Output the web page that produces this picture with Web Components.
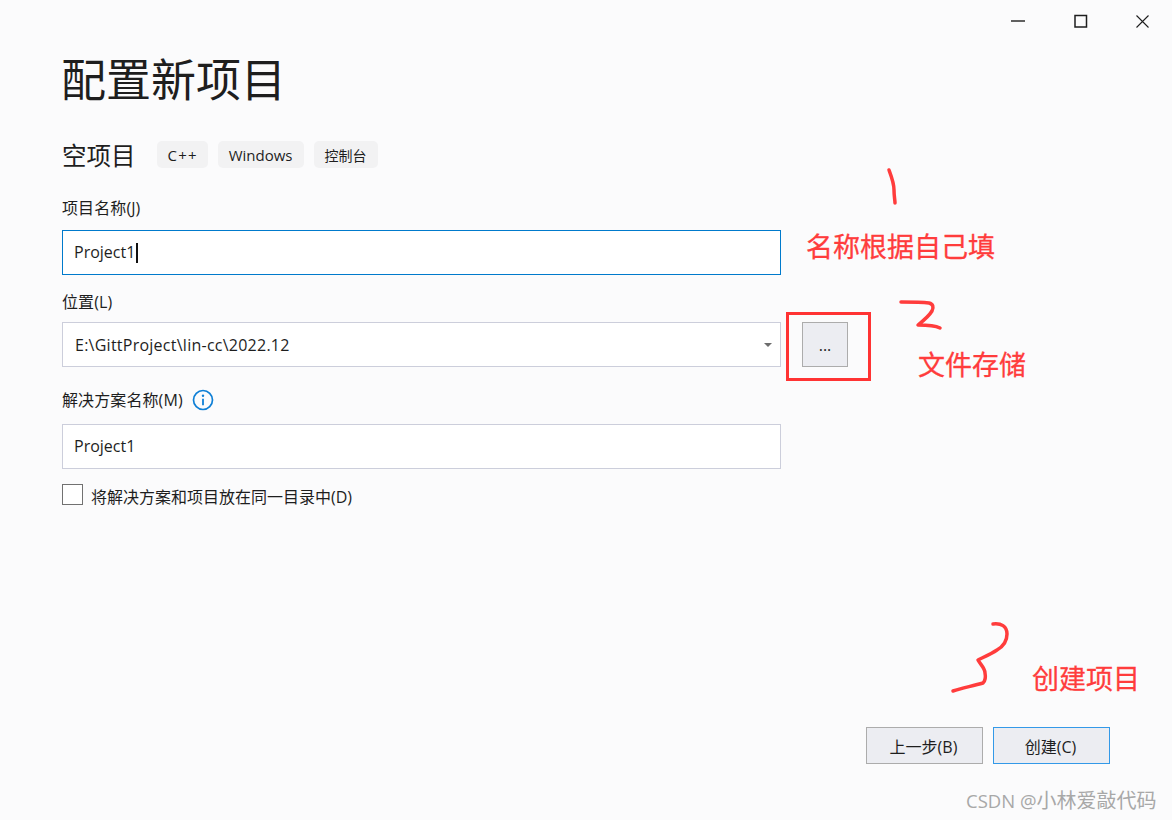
<!DOCTYPE html>
<html lang="zh">
<head>
<meta charset="utf-8">
<title>配置新项目</title>
<style>
  html, body { margin: 0; height: 100%; background: #fbfbfc; }
  body { font-family: "Open Sans", "Noto Sans CJK SC", sans-serif; color: #1e1e1e; overflow: hidden; }
</style>
</head>
<body>
<project-dialog>
  <win-controls slot="controls"></win-controls>
  <field-box slot="form" label="项目名称(J)" value="Project1" focused style="--label-gap:11px;--val-shift:2px"></field-box>
  <field-box slot="form" label="位置(L)" value="E:\GittProject\lin-cc\2022.12" combo style="margin-top:16px;--label-gap:9px;--val-track:.25px;--val-left:1px"></field-box>
  <field-box slot="form" label="解决方案名称(M)" value="Project1" info style="margin-top:22px;--label-gap:13px;--val-shift:2px"></field-box>
  <check-row slot="form">将解决方案和项目放在同一目录中(D)</check-row>
  <flat-button slot="actions">上一步(B)</flat-button>
  <flat-button slot="actions" primary>创建(C)</flat-button>
</project-dialog>
<red-notes></red-notes>

<script>
class WinControls extends HTMLElement {
  connectedCallback() {
    this.attachShadow({ mode: "open" }).innerHTML = `
      <style>
        :host { display: flex; justify-content: flex-end; height: 42px; }
        svg { display: block; }
      </style>
      <svg width="182" height="42" viewBox="0 0 182 42" fill="none" stroke="#1e1e1e">
        <path d="M21 21h14" stroke-width="1.4"/>
        <rect x="85" y="15.500" width="11.500" height="11.500" stroke-width="1.500"/>
        <path d="M146.500 15.500l12 12M158.500 15.500l-12 12" stroke-width="1.100"/>
      </svg>`;
  }
}

class TagChip extends HTMLElement {
  connectedCallback() {
    this.attachShadow({ mode: "open" }).innerHTML = `
      <style>
        :host { display: block; height: 27px; line-height: 29px; padding: 0 11px; background: #f2f2f3;
                border-radius: 5px; font-size: 14px; color: #1e1e1e; }
      </style>
      <slot></slot>`;
  }
}

class FieldBox extends HTMLElement {
  connectedCallback() {
    const info = this.hasAttribute("info") ? `
      <svg class="info" width="22" height="22" viewBox="0 0 22 22" fill="none">
        <circle cx="11" cy="11" r="9.500" stroke="#0e7fd6" stroke-width="1.700"/>
        <circle cx="11" cy="6.800" r="1.200" fill="#0e7fd6"/>
        <path d="M11 9.800v6.400" stroke="#0e7fd6" stroke-width="1.800"/>
      </svg>` : "";
    const caret = this.hasAttribute("combo") ? `<span class="caret"></span>` : "";
    const cursor = this.hasAttribute("focused") ? `<span class="cursor"></span>` : "";
    this.attachShadow({ mode: "open" }).innerHTML = `
      <style>
        :host { display: block; width: 719px; }
        .label { display: flex; align-items: center; gap: 9px; height: 22px; margin-bottom: var(--label-gap, 9px);
                 font-size: 16px; line-height: 22px; letter-spacing: .1px; color: #1e1e1e; }
        .box { box-sizing: border-box; height: 45px; display: flex; align-items: center; padding: 0 8px 0 11px;
               background: #fff; border: 1px solid #cccedb; font-size: 16px; color: #1e1e1e; }
        :host([focused]) .box { border-color: #007acc; }
        .cursor { width: 2px; height: 20px; background: #111; margin-left: 1px; }
        .caret { margin-left: auto; border: 4px solid transparent; border-top: 4px solid #6d6d6d; border-bottom: 0; }
        .val { white-space: pre; padding-bottom: var(--val-shift, 0); padding-left: var(--val-left, 0);
               letter-spacing: var(--val-track, 0); }
      </style>
      <div class="label"><span>${this.getAttribute("label")}</span>${info}</div>
      <div class="box"><span class="val">${this.getAttribute("value")}</span>${cursor}${caret}</div>`;
  }
}

class CheckRow extends HTMLElement {
  connectedCallback() {
    this.attachShadow({ mode: "open" }).innerHTML = `
      <style>
        :host { display: flex; gap: 8px; height: 22px; margin-top: 15px; font-size: 16px; line-height: 22px; }
        .mark { box-sizing: border-box; width: 21px; height: 21px; background: #fff; border: 1px solid #717171; }
        .text { padding-top: 2px; }
      </style>
      <span class="mark"></span><span class="text"><slot></slot></span>`;
  }
}

class FlatButton extends HTMLElement {
  connectedCallback() {
    this.attachShadow({ mode: "open" }).innerHTML = `
      <style>
        :host { box-sizing: border-box; display: flex; align-items: center; justify-content: center;
                width: 117px; height: 37px; padding-right: 2px; background: #ecedf2; border: 1px solid #acacac;
                font-size: 16px; color: #1e1e1e; }
        :host([primary]) { border-color: #3399e8; }
      </style>
      <slot></slot>`;
  }
}

class ProjectDialog extends HTMLElement {
  connectedCallback() {
    this.attachShadow({ mode: "open" }).innerHTML = `
      <style>
        :host { display: flex; flex-direction: column; box-sizing: border-box; width: 1172px; height: 820px; }
        .body { flex: 1; padding: 0 62px; display: flex; flex-direction: column; }
        h1 { margin: 0 0 0 -1px; height: 76px; font-size: 45px; line-height: 76px; font-weight: 400; color: #1e1e1e; }
        .sub { display: flex; align-items: center; gap: 10px; height: 27px; margin-top: 23px; margin-bottom: 29px; }
        .sub h2 { margin: 0 11px 0 0; padding-top: 2px; font-size: 24.500px; line-height: 27px; font-weight: 400; }
        .form { display: block; width: 719px; }
        .actions { display: flex; justify-content: flex-end; gap: 10px; padding-right: 62px; margin-bottom: 56px; }
      </style>
      <slot name="controls"></slot>
      <div class="body">
        <h1>配置新项目</h1>
        <div class="sub">
          <h2>空项目</h2>
          <tag-chip style="font-size:15px;letter-spacing:1.200px;padding:0 10px 0 11px">C++</tag-chip>
          <tag-chip style="font-size:15px">Windows</tag-chip>
          <tag-chip>控制台</tag-chip>
        </div>
        <div class="form"><slot name="form"></slot></div>
      </div>
      <div class="actions"><slot name="actions"></slot></div>`;
  }
}

// screenshot annotations drawn over the dialog, free placed
class RedNotes extends HTMLElement {
  connectedCallback() {
    this.attachShadow({ mode: "open" }).innerHTML = `
      <style>
        :host { position: absolute; inset: 0; display: block; pointer-events: none; }
        .note { position: absolute; font-size: 27px; line-height: 36px; color: #ff3c3c; white-space: nowrap;
                -webkit-text-stroke: .3px #ff3c3c; }
        .frame { position: absolute; box-sizing: border-box; left: 786px; top: 312px; width: 85px; height: 69px;
                 border: 3px solid #ff3333; }
        .browse { position: absolute; left: 802px; top: 322px; box-sizing: border-box; width: 46px; height: 45px;
                  background: #ecedf2; border: 1px solid #acacac; font-size: 16px; display: flex;
                  align-items: center; justify-content: center; color: #1e1e1e; }
        .mark { position: absolute; left: 966px; top: 787px; font-size: 20px; line-height: 28px; color: #a8a8a8;
                white-space: nowrap; }
        .mark span { font-size: 18.500px; }
        svg { position: absolute; inset: 0; }
      </style>
      <svg width="1172" height="820" fill="none" stroke="#ff3c3c" stroke-width="3.500" stroke-linecap="round" stroke-linejoin="round">
        <path d="M889 170c3 8 5 13 5 20 0 6 1 10 1 13"/>
        <path d="M901 302c10 0 20 0 28 1 4 1 5 4 3 8-3 5-9 10-14 14 8 0 16 0 22 3"/>
        <path d="M993 624c8-1 14 2 14 10 0 7-3 12-10 16-6 4-13 7-19 10 2 4 7 8 7 13 1 5 0 8-2 10-10 3-21 5-30 8"/>
      </svg>
      <div class="note" style="left:806px;top:229px">名称根据自己填</div>
      <div class="frame"></div>
      <div class="browse">...</div>
      <div class="note" style="left:918px;top:347px">文件存储</div>
      <div class="note" style="left:1032px;top:661px">创建项目</div>
      <div class="mark"><span>CSDN @</span>小林爱敲代码</div>`;
  }
}

customElements.define("win-controls", WinControls);
customElements.define("tag-chip", TagChip);
customElements.define("field-box", FieldBox);
customElements.define("check-row", CheckRow);
customElements.define("flat-button", FlatButton);
customElements.define("project-dialog", ProjectDialog);
customElements.define("red-notes", RedNotes);
</script>
</body>
</html>
